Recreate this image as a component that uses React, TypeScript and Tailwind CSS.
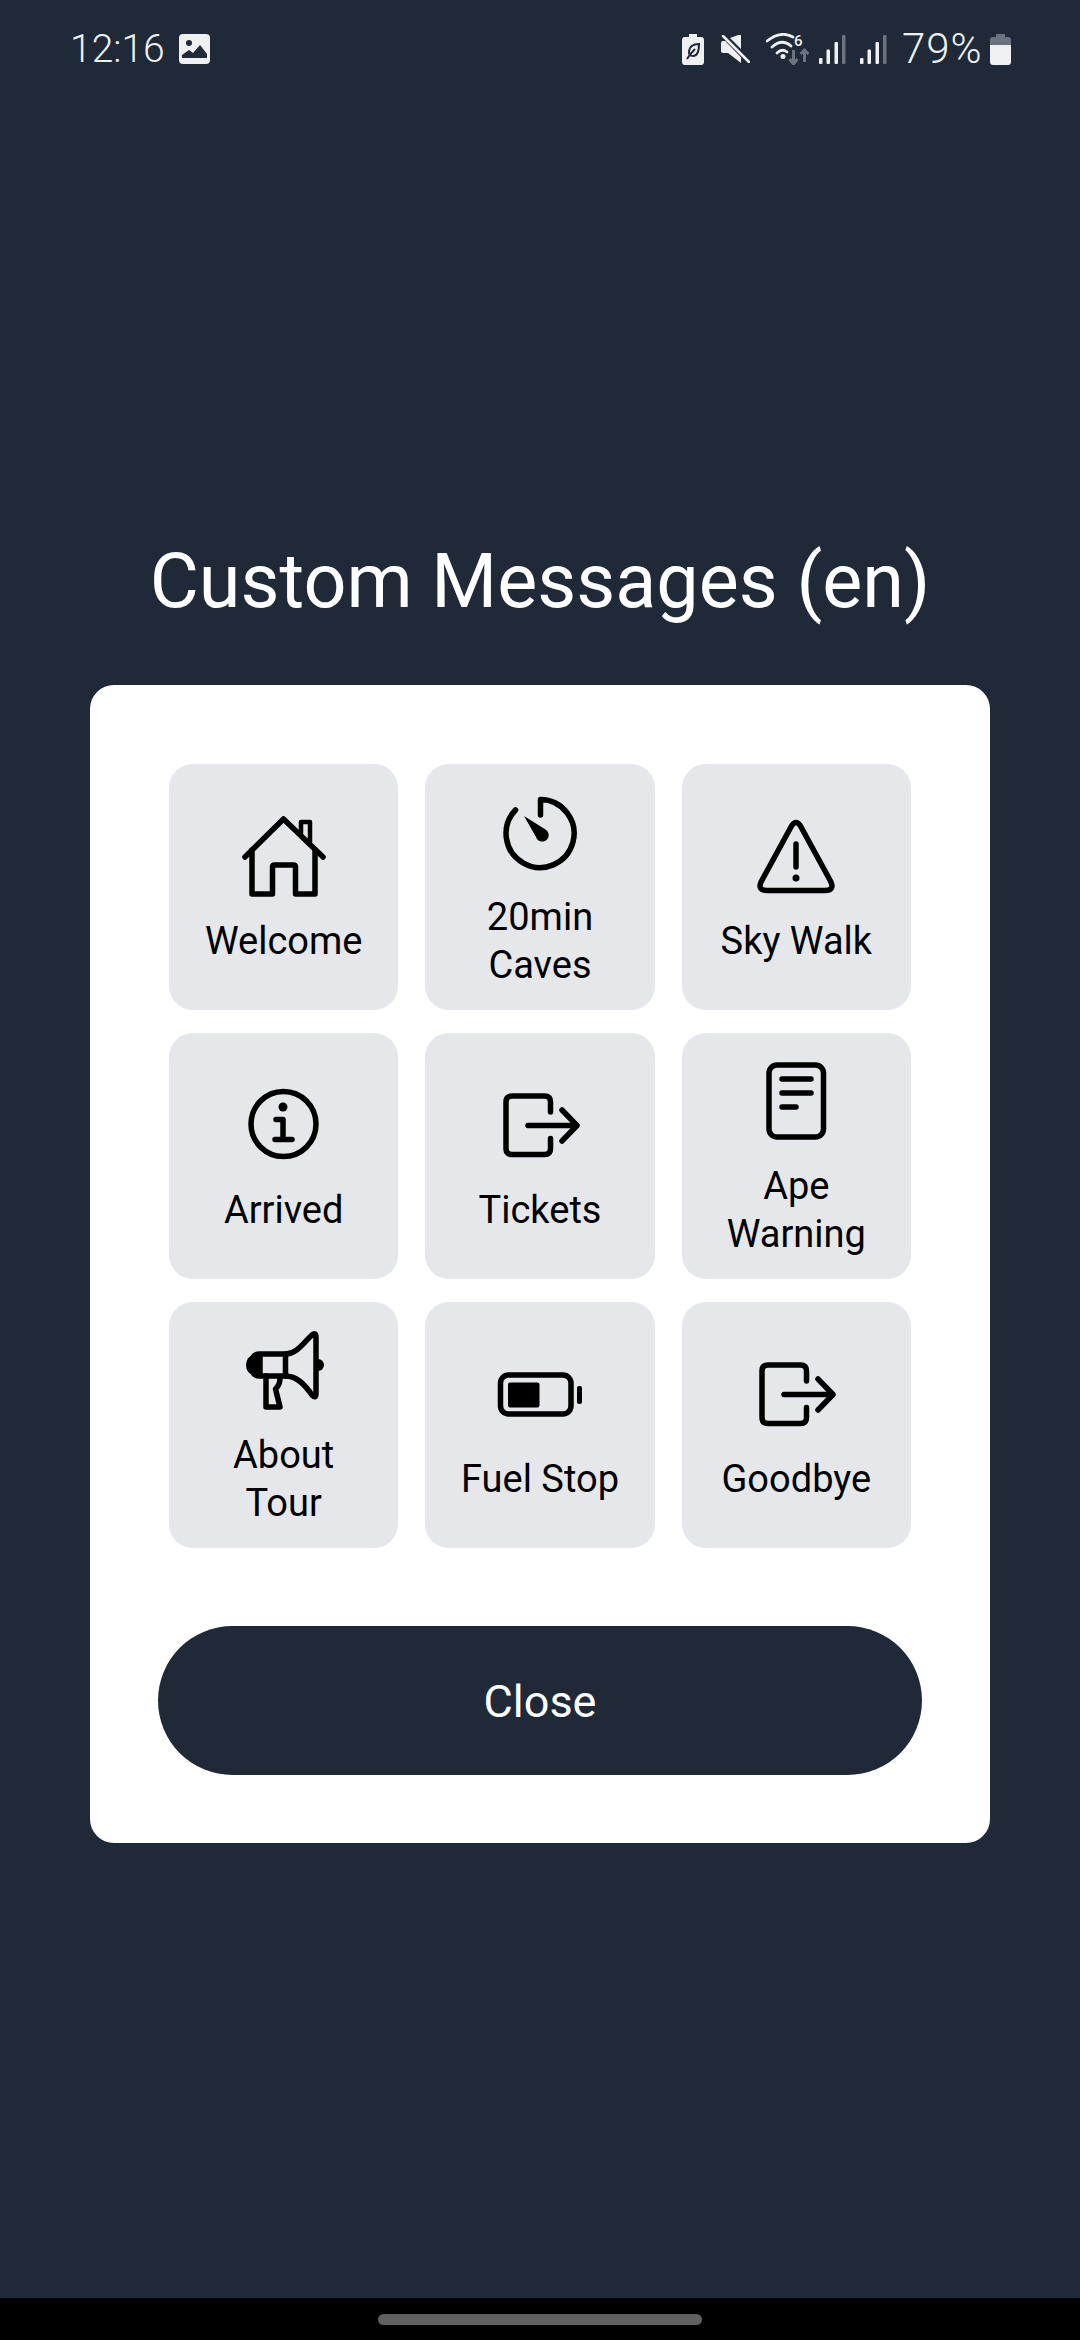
const items = [
  { label: ['Welcome'], icon: 'house' },
  { label: ['20min', 'Caves'], icon: 'timer' },
  { label: ['Sky Walk'], icon: 'warning' },
  { label: ['Arrived'], icon: 'info' },
  { label: ['Tickets'], icon: 'exit' },
  { label: ['Ape', 'Warning'], icon: 'doc' },
  { label: ['About', 'Tour'], icon: 'megaphone' },
  { label: ['Fuel Stop'], icon: 'battery' },
  { label: ['Goodbye'], icon: 'exit' },
];

function TileIcon({ name }: { name: string }) {
  return (
    <svg
      viewBox="0 0 96 96"
      className="h-[96px] w-[96px] shrink-0"
      fill="none"
      stroke="#000"
      strokeWidth={5.5}
      strokeLinecap="round"
      strokeLinejoin="round"
    >
      {name === 'house' && (
        <>
          <path d="M9 48 47.5 10 87 48" />
          <path d="M16 41V85H36.500V58Q36.500 56 38.500 56H57.500Q59.500 56 59.500 58V85H79V41" />
          <path d="M65 24V13H74V33" strokeWidth={4.5} />
        </>
      )}
      {name === 'timer' && (
        <>
          <path d="M48.500 30V14.500A34 34 0 1 1 23.500 25" />
          <path d="M32 31 53.500 44.500A6.500 6.500 0 1 1 44 52Z" fill="#000" stroke="none" />
        </>
      )}
      {name === 'warning' && (
        <>
          <path d="M43.500 17Q48 10 52.500 17L83 73Q86.500 81.500 77 81.500H19Q9.500 81.500 13 73Z" />
          <path d="M48 35V58" />
          <circle cx="48" cy="69" r="3.500" fill="#000" stroke="none" />
        </>
      )}
      {name === 'info' && (
        <>
          <circle cx="47.500" cy="46" r="32.500" />
          <circle cx="47" cy="29" r="4.500" fill="#000" stroke="none" />
          <path d="M40 41.500H47V61.500M39 61.500H56" />
        </>
      )}
      {name === 'exit' && (
        <>
          <path d="M58.500 34V24Q58.500 18 52.500 18H20Q14 18 14 24V70.500Q14 76.500 20 76.500H52.500Q58.500 76.500 58.500 70.500V60.500" />
          <path d="M36 47.500H85M70 32 85 47.500 70 63" />
        </>
      )}
      {name === 'doc' && (
        <>
          <rect x="21" y="11" width="54.500" height="72" rx="8" />
          <path d="M34 25H63M34 39H63M34 53H48" />
        </>
      )}
      {name === 'megaphone' && (
        <>
          <ellipse cx="17" cy="42" rx="7" ry="9.500" fill="#000" stroke="none" />
          <path d="M24 31H49.500V53H24Q16.500 53 16.500 46V38Q16.500 31 24 31ZM24 31V53" />
          <path d="M49.500 31C61 31 67 20 76 12Q80 9 80 14V71Q80 76 76 72C69 62 61 53 49.500 53" />
          <path d="M30 53V84H44L39.500 66Q44 62 44 55" />
          <path d="M82 36A6 6 0 0 1 82 48Z" fill="#000" stroke="none" />
        </>
      )}
      {name === 'battery' && (
        <>
          <rect x="8.500" y="28" width="70.500" height="39" rx="8" />
          <rect x="16" y="35.500" width="31.500" height="25" rx="2" fill="#000" stroke="none" />
          <rect x="85" y="39" width="5" height="18" rx="2" fill="#000" stroke="none" />
        </>
      )}
    </svg>
  );
}

function Signal({ className }: { className: string }) {
  return (
    <svg viewBox="0 0 27 29" className={`h-[29px] w-[27px] ${className}`}>
      <rect x="0" y="23" width="3.500" height="6" rx="1" fill="#eef0f2" />
      <rect x="7.500" y="14.500" width="3.500" height="14.500" rx="1" fill="#eef0f2" />
      <rect x="15.500" y="7" width="3.500" height="22" rx="1" fill="#eef0f2" />
      <rect x="23" y="0" width="3.500" height="29" rx="1" fill="#6b7280" />
    </svg>
  );
}

function StatusIcons() {
  const light = '#eef0f2';
  const dim = '#6b7280';
  return (
    <div className="flex items-center">
      <svg viewBox="0 0 22 31" className="h-[31px] w-[22px]">
        <path d="M7 0H15V3H19Q22 3 22 6V28Q22 31 19 31H3Q0 31 0 28V6Q0 3 3 3H7Z" fill={light} />
        <path d="M17 10Q8 10 7 17Q6.500 22 11 22Q17 22 17 10ZM5 25Q8 20 13 15" fill="none" stroke="#1f2937" strokeWidth={2} />
      </svg>
      <svg viewBox="0 0 29 28" className="ml-[17px] h-[28px] w-[29px]">
        <path d="M7 6H2Q0 6 0 8V16Q0 18 2 18H7L20 28V20Z" fill={light} />
        <path d="M9 3 20 -1V14Z" fill={light} />
        <path d="M2 0 28 27" stroke="#1f2937" strokeWidth={5} />
        <path d="M2 1 28 27" stroke={light} strokeWidth={2.500} strokeLinecap="round" />
      </svg>
      <svg viewBox="0 0 43 32" className="ml-[16px] h-[32px] w-[43px]">
        <path d="M1 8Q15 -3 27 4M6 14Q16 5 25 13M11 20Q16 15 21 19" fill="none" stroke={light} strokeWidth={2.700} strokeLinecap="round" />
        <circle cx="17" cy="23.500" r="2.500" fill={light} />
        <text x="28" y="13" fontSize="15" fontFamily="Roboto, sans-serif" fontWeight={500} fill={light}>6</text>
        <path d="M27.500 17V31M23.500 26 27.500 31 31.500 26" fill="none" stroke={dim} strokeWidth={3} />
        <path d="M38.500 29V17M34.500 21 38.500 17 42.500 21" fill="none" stroke={dim} strokeWidth={3} />
      </svg>
      <Signal className="ml-[10px]" />
      <Signal className="ml-[14px]" />
      <span className="ml-[15px] w-[80px] text-[42px] leading-[40px] font-light tracking-[1px] whitespace-nowrap text-[#eef0f2]">79%</span>
      <svg viewBox="0 0 21 31" className="ml-[8px] h-[31px] w-[21px]">
        <path d="M6 0H15V3H18Q21 3 21 6V11H0V6Q0 3 3 3H6Z" fill={dim} />
        <path d="M0 11H21V28Q21 31 18 31H3Q0 31 0 28Z" fill={light} />
      </svg>
    </div>
  );
}

export default function App() {
  return (
    <div className="flex h-[2340px] w-[1080px] flex-col bg-[#1f2937] font-['Roboto',sans-serif]">
      <div className="flex h-[98px] shrink-0 items-center justify-between pr-[69px] pl-[70px]">
        <div className="flex items-center">
          <span className="w-[91px] text-[39px] leading-[40px] font-light whitespace-nowrap text-[#eef0f2]">12:16</span>
          <svg viewBox="0 0 31 30" className="ml-[18px] h-[30px] w-[31px]">
            <rect width="31" height="30" rx="4" fill="#eef0f2" />
            <circle cx="10" cy="9" r="3" fill="#1f2937" />
            <path d="M3 24V21L10 16 14 19 21 11 28 20V24Z" fill="#1f2937" />
          </svg>
        </div>
        <StatusIcons />
      </div>

      <div className="flex flex-1 flex-col items-center justify-center pb-[20px]">
        <h1 className="text-[75.5px] leading-[96px] font-normal text-white">Custom Messages (en)</h1>
        <div className="mt-[56px] w-[900px] rounded-3xl bg-white px-[68px] pt-[79px] pb-[68px]">
          <div className="mx-[11px] grid grid-cols-3 gap-x-[27px] gap-y-[23px]">
            {items.map((item) => (
              <div
                key={item.label.join(' ')}
                className="flex h-[246px] flex-col items-center justify-center gap-[12px] rounded-3xl bg-[#e5e7eb]"
              >
                <TileIcon name={item.icon} />
                <div className="text-center text-[38px] leading-[48px] text-black">
                  {item.label.map((line) => (
                    <div key={line}>{line}</div>
                  ))}
                </div>
              </div>
            ))}
          </div>
          <button className="mt-[78px] flex h-[149px] w-full items-center justify-center rounded-full bg-[#1f2937] pt-[2px] text-[45px] text-white">
            Close
          </button>
        </div>
      </div>

      <div className="flex h-[42px] shrink-0 items-start justify-center bg-black pt-[16px]">
        <div className="h-[11px] w-[324px] rounded-full bg-[#606060]" />
      </div>
    </div>
  );
}
